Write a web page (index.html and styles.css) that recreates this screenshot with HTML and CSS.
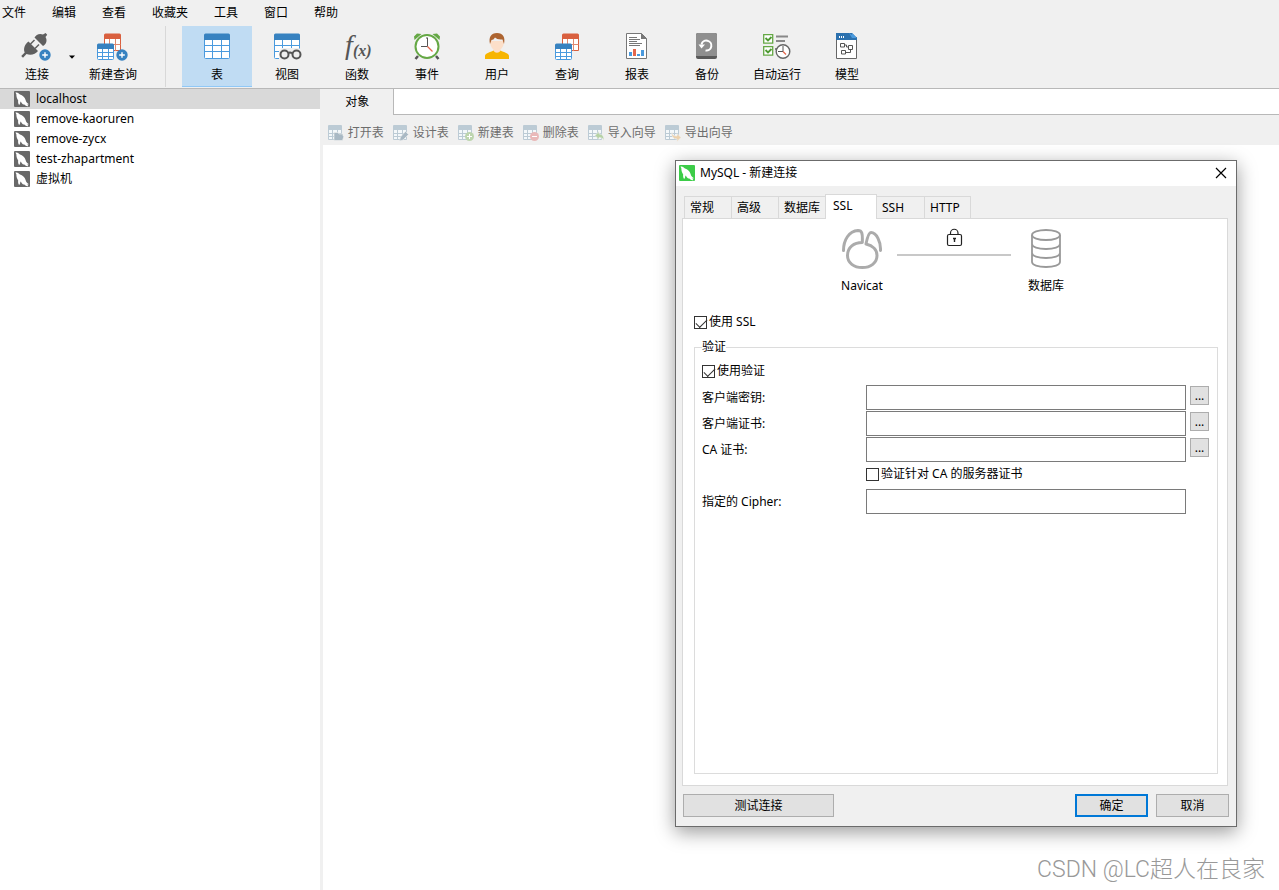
FILE: index.html
```
<!DOCTYPE html>
<html lang="zh-CN">
<head>
<meta charset="utf-8">
<title>Navicat</title>
<link rel="stylesheet" href="styles.css">
</head>
<body>
<svg class="sprite" aria-hidden="true">
  <symbol id="dolphin" viewBox="0 0 16 16">
    <rect width="16" height="16" rx="1"/>
    <path fill="#fff" d="M1.500 1.500C3.500 1 5 2.300 6 3.600C8.500 4.200 10.800 6.200 11.600 9C12 10.900 12.700 12 15 13.300L13.300 13.500L14.500 15.300C12.500 15.200 11.200 14.500 10.400 13.400C8.700 13.800 7.600 12.400 7 10.800L6.300 10.800C6.300 12.300 6 13.200 5.200 14C4.300 12.800 3.800 11.200 4.200 9.400C2.700 7.400 2.300 5.200 2.400 3.500Z"/>
  </symbol>
  <symbol id="grid" viewBox="0 0 26 26">
    <path fill="#fff" d="M.5 1.500h25v24H.5z"/>
    <path fill="none" stroke="#4a9ade" d="M.5 6v18.500a1 1 0 0 0 1 1h23a1 1 0 0 0 1-1V6M8.500 6v19M17.500 6v19M1 12.500h24M1 18.500h24"/>
    <path fill="#3782c0" d="M0 7V2a1.500 1.500 0 0 1 1.500-1.500h23A1.500 1.500 0 0 1 26 2v5z"/>
  </symbol>
  <symbol id="pair" viewBox="0 0 26 28">
    <path fill="#fff" stroke="#d9603f" d="M8.500 6v11.500h16V6"/>
    <path fill="none" stroke="#e08a70" d="M13.500 6v12M19.500 6v12M8.500 11.500h16"/>
    <path fill="#d9603f" d="M8 6V2a1.500 1.500 0 0 1 1.500-1.500h14A1.500 1.500 0 0 1 25 2v4z"/>
    <path fill="#fff" stroke="#4a9ade" d="M1.500 15v10.500a1 1 0 0 0 1 1h14a1 1 0 0 0 1-1V15zM6.500 15v11M12.500 15v11M2 19.500h15M2 23.500h15"/>
    <path fill="#3782c0" d="M1 16v-4a1.500 1.500 0 0 1 1.500-1.500h14A1.500 1.500 0 0 1 18 12v4z"/>
  </symbol>
  <symbol id="plus" viewBox="0 0 12 12">
    <circle cx="6" cy="6" r="5.700" fill="#3782c0"/>
    <path stroke="#fff" stroke-width="1.400" d="M6 3.200v5.600M3.200 6h5.600"/>
  </symbol>
  <symbol id="minigrid" viewBox="0 0 16 16">
    <path fill="#f4f8fa" stroke="#bccbd5" d="M.5 3v11.500h13V3zM4.500 5v10M9.500 5v10M1 8.500h13M1 11.500h13"/>
    <path fill="#bccbd5" d="M0 1a1 1 0 0 1 1-1h12a1 1 0 0 1 1 1v4H0z"/>
  </symbol>
</svg>

<div class="app">
  <nav class="menu" aria-label="主菜单">
    <button>文件</button><button>编辑</button><button>查看</button><button>收藏夹</button><button>工具</button><button>窗口</button><button>帮助</button>
  </nav>

  <div class="toolbar">
    <div class="connect">
      <button class="tool tool--connect">
        <svg width="34" height="30" viewBox="0 0 34 30">
          <g fill="#5f5f5f">
            <path d="M8.500 9.500L18 19C15.500 22.500 10.500 23.500 6.500 22L3 25.800L1.200 24L4.700 20.400C3 16.500 5 12 8.500 9.500z"/>
            <path d="M14.500 5.500L23 14C26.500 12 27.500 8.500 25.500 5L27.200 2.800L25.600 1L23 2.600C19.500 .8 16 2.800 14.500 5.500z"/>
          </g>
          <path stroke="#5f5f5f" stroke-width="1.500" d="M10.500 12l4-4M15 16.500l4-4"/>
          <use href="#plus" x="19" y="17" width="12" height="12"/>
        </svg>
        <span>连接</span>
      </button>
      <button class="drop" aria-label="更多连接"><svg width="6" height="4" viewBox="0 0 6 4"><path d="M0 .5h6L3 3.700z"/></svg></button>
    </div>
    <button class="tool tool--query">
      <svg width="34" height="30" viewBox="0 0 34 30"><use href="#pair" x="0" y="1" width="26" height="28"/><use href="#plus" x="20" y="17" width="12" height="12"/></svg>
      <span>新建查询</span>
    </button>
    <div class="tools">
      <button class="tool tool--on">
        <svg width="26" height="30" viewBox="0 0 26 30"><use href="#grid" y="1" width="26" height="26"/></svg>
        <span>表</span>
      </button>
      <button class="tool">
        <svg width="26" height="30" viewBox="0 0 26 30">
          <use href="#grid" y="1" width="26" height="26"/>
          <path fill="#f0f0f0" d="M5 19l3-3h17l3 3v10H5z"/>
          <g fill="#f0f0f0" stroke="#555" stroke-width="2"><path fill="none" d="M14 21.500q2-2 4 0"/><circle cx="10.500" cy="22.500" r="4"/><circle cx="22.500" cy="22.500" r="4"/></g>
        </svg>
        <span>视图</span>
      </button>
      <button class="tool">
        <svg width="30" height="30" viewBox="0 0 30 30" fill="#555">
          <text class="fx-f" x="3" y="22">f</text><text class="fx-x" x="11" y="24">(x)</text>
        </svg>
        <span>函数</span>
      </button>
      <button class="tool">
        <svg width="28" height="30" viewBox="0 0 28 30">
          <path stroke="#555" stroke-width="2.500" d="M5 24l-2.500 3M23 24l2.500 3"/>
          <path fill="#65a845" d="M1.500 8L1 4.500 4 1.500 8.500 2zM26.500 8l.5-3.500-3-3-4.500.5z"/>
          <circle cx="14" cy="14.500" r="11.500" fill="#fff" stroke="#65a845" stroke-width="2"/>
          <path fill="none" stroke="#555" d="M14.500 6v8.500H8M14 5v2"/><path stroke="#e5674c" stroke-width="1.300" d="M14.500 14.500l5 5"/>
        </svg>
        <span>事件</span>
      </button>
      <button class="tool">
        <svg width="26" height="30" viewBox="0 0 26 30">
          <path fill="#fcdfc9" d="M6 9h14c0 5-2 7-3.500 8.500v4h-7v-4C8 16 6 14 6 9z"/>
          <path fill="#ad6430" d="M6 12C4.500 5 7 1 13 1s8.500 4 7 11l-1.500-4.500q-5.500.5-7.500-2Q9.500 8 7.500 8z"/>
          <path fill="#f7b500" d="M1 27v-3c0-3 5-3.500 8.500-5.500 1.500 3 5.500 3 7 0C20 20.500 25 21 25 24v3z"/>
        </svg>
        <span>用户</span>
      </button>
      <button class="tool">
        <svg width="26" height="30" viewBox="0 0 26 30"><use href="#pair" y="1" width="26" height="28"/></svg>
        <span>查询</span>
      </button>
      <button class="tool">
        <svg width="26" height="30" viewBox="0 0 26 30">
          <path fill="#fff" stroke="#777" d="M2.500 1.500h15l5 5v20h-20z"/><path fill="#777" d="M17 1v6h6z"/>
          <path stroke="#777" d="M5 5.500h8M5 7.500h11M5 9.500h8M5 11.500h13M5 13.500h11"/>
          <path fill="#4a9ade" d="M5 20h3v4H5zM13 22h3v2h-3zM17 18h3v6h-3z"/><path fill="#e5674c" d="M9 17h3v7H9z"/>
        </svg>
        <span>报表</span>
      </button>
      <button class="tool">
        <svg width="26" height="30" viewBox="0 0 26 30">
          <rect x="2" y="1" width="21" height="26" rx="2" fill="#5a5a5a"/><path fill="#8f8f8f" d="M2 24V3a2 2 0 0 1 2-2h17a2 2 0 0 1 2 2v21z"/>
          <path fill="none" stroke="#fff" stroke-width="2" d="M7.500 12.500a5 5 0 1 1 4 6"/><path fill="#fff" d="M4.500 12.500h6.500l-3.500 4z"/>
        </svg>
        <span>备份</span>
      </button>
      <button class="tool">
        <svg width="28" height="30" viewBox="0 0 28 30">
          <path fill="#fff" stroke="#65a845" stroke-width="1.300" d="M.7 2.700h9v8.500h-9zM.7 14.700h9v8.500h-9z"/>
          <path fill="none" stroke="#4f9a33" stroke-width="1.800" d="M2.500 6l2.500 2.500L8.500 5M2.500 18l2.500 2.500L8.500 17"/>
          <path stroke="#888" stroke-width="2" d="M13 4.500h12M13 9h9M12 17h3"/>
          <circle cx="20" cy="19.500" r="6.800" fill="#fff" stroke="#666" stroke-width="1.400"/>
          <path fill="none" stroke="#555" d="M20 14v5.500h-5"/><path stroke="#e5674c" stroke-width="1.300" d="M20 19.500l3 3"/>
        </svg>
        <span>自动运行</span>
      </button>
      <button class="tool">
        <svg width="26" height="30" viewBox="0 0 26 30">
          <path fill="#fff" stroke="#666" d="M2.500 5v21.500h20V5"/>
          <path fill="#2c71ae" d="M2 1h16l5 5v2H2z"/><path fill="#4a9ade" d="M15 1l8 5h-5zM18 1l5 5h-5z"/>
          <path fill="#fff" d="M5 4h1v2H5zM7 4h1v2H7zM9 4h1v2H9z"/>
          <path fill="none" stroke="#555" d="M6.500 11.500h4v3.500h-4zM14.500 13.500h4v4h-4zM7.500 18.500h4v3.500h-4zM10.500 13h2v2h2M16.500 17.500v3h-5"/>
        </svg>
        <span>模型</span>
      </button>
    </div>
  </div>

  <div class="workspace">
    <ul class="tree">
      <li class="tree__row tree__row--on"><svg width="16" height="16"><use href="#dolphin"/></svg>localhost</li>
      <li class="tree__row"><svg width="16" height="16"><use href="#dolphin"/></svg>remove-kaoruren</li>
      <li class="tree__row"><svg width="16" height="16"><use href="#dolphin"/></svg>remove-zycx</li>
      <li class="tree__row"><svg width="16" height="16"><use href="#dolphin"/></svg>test-zhapartment</li>
      <li class="tree__row"><svg width="16" height="16"><use href="#dolphin"/></svg>虚拟机</li>
    </ul>
    <main class="pane">
      <div class="strip"><button class="strip__tab">对象</button><div class="strip__rest"></div></div>
      <div class="actions">
        <button disabled><svg width="16" height="16" viewBox="0 0 16 16"><use href="#minigrid"/><path fill="#a9b9c4" stroke="#f0f0f0" stroke-width=".6" d="M6 15.500v-8h4l1 1.500h4v2h1l-1.500 4.500z"/></svg>打开表</button>
        <button disabled><svg width="16" height="16" viewBox="0 0 16 16"><use href="#minigrid"/><path fill="#a9b9c4" stroke="#f0f0f0" stroke-width=".6" d="M6.500 16l1-4 5-5.500 3 3-5.500 5.500z"/></svg>设计表</button>
        <button disabled><svg width="16" height="16" viewBox="0 0 16 16"><use href="#minigrid"/><circle cx="11.500" cy="11.500" r="4.500" fill="#bdd5ae"/><path stroke="#fff" d="M11.500 9v5M9 11.500h5"/></svg>新建表</button>
        <button disabled><svg width="16" height="16" viewBox="0 0 16 16"><use href="#minigrid"/><circle cx="11.500" cy="11.500" r="4.500" fill="#e9b9b9"/><path stroke="#fff" d="M9 11.500h5"/></svg>删除表</button>
        <button disabled><svg width="16" height="16" viewBox="0 0 16 16"><use href="#minigrid"/><path fill="#b5d2a5" stroke="#f0f0f0" stroke-width=".6" d="M7 10.500l4-4V9c3 0 5 2 5 6.500-1-2-2.500-3-5-3v2z"/></svg>导入向导</button>
        <button disabled><svg width="16" height="16" viewBox="0 0 16 16"><use href="#minigrid"/><path fill="#ecd2ae" stroke="#f0f0f0" stroke-width=".6" d="M7 7c0 3 2 4 5 4V8.500l4 4-4 4V14c-4 0-6-3-5-7z"/></svg>导出向导</button>
      </div>
      <div class="objects"></div>
    </main>
  </div>

  <p class="watermark">CSDN @LC超人在良家</p>

  <section class="dialog" role="dialog" aria-labelledby="dialog-title">
    <header class="dialog__title">
      <svg width="16" height="16"><use href="#dolphin"/></svg>
      <h1 id="dialog-title">MySQL - 新建连接</h1>
      <button aria-label="关闭"><svg width="12" height="12" viewBox="0 0 12 12"><path stroke="#000" stroke-width="1.200" d="M1 1l10 10M11 1L1 11"/></svg></button>
    </header>
    <div class="dialog__body">
      <div class="tabs" role="tablist">
        <button role="tab">常规</button><button role="tab">高级</button><button role="tab">数据库</button><button role="tab" aria-selected="true" class="tabs__on">SSL</button><button role="tab">SSH</button><button role="tab">HTTP</button>
      </div>
      <div class="panel" role="tabpanel">
        <div class="route">
          <figure>
            <svg width="42" height="42" viewBox="0 0 42 42" fill="none" stroke="#ababab" stroke-width="3" stroke-linecap="round" stroke-linejoin="round">
              <path d="M2.500 22.500C2.500 12 8 3 17 2.500C21 2.500 21.700 5 21.300 14.500C13 14.500 6.500 19 6.500 27.500C6.500 35 13 39.500 21.300 39.500S36 35 36 27.500C36 22 32 17.500 25 16C26 11 27.500 4.500 30 4.500C35.500 4.500 40 14 39.500 22.500"/>
            </svg>
            <figcaption>Navicat</figcaption>
          </figure>
          <div class="link">
            <svg width="17" height="18" viewBox="0 0 17 18" fill="none" stroke="#222"><path d="M4.500 7V5a3.700 3.700 0 0 1 7.500 0V7" stroke-width="1.200"/><rect x="1.500" y="6.500" width="14" height="11" rx="1.500" stroke-width="1.200"/><path d="M8.500 10v4M7 10.500h3" stroke-width="1.400"/></svg>
          </div>
          <figure>
            <svg width="42" height="42" viewBox="0 0 42 42" fill="none" stroke="#999" stroke-width="1.800"><ellipse cx="21" cy="7" rx="14" ry="5"/><path d="M7 7v27c0 3 6 5 14 5s14-2 14-5V7M7 16c0 3 6 5 14 5s14-2 14-5M7 25c0 3 6 5 14 5s14-2 14-5"/></svg>
            <figcaption>数据库</figcaption>
          </figure>
        </div>
        <label class="check"><input type="checkbox" checked>使用 SSL</label>
        <fieldset class="auth">
          <legend>验证</legend>
          <label class="check"><input type="checkbox" checked>使用验证</label>
          <div class="form">
            <label for="key">客户端密钥:</label><input id="key" type="text"><button aria-label="浏览客户端密钥">...</button>
            <label for="cert">客户端证书:</label><input id="cert" type="text"><button aria-label="浏览客户端证书">...</button>
            <label for="ca">CA 证书:</label><input id="ca" type="text"><button aria-label="浏览 CA 证书">...</button>
            <label class="check form__verify"><input type="checkbox">验证针对 CA 的服务器证书</label>
            <label for="cipher">指定的 Cipher:</label><input id="cipher" type="text">
          </div>
        </fieldset>
      </div>
      <footer class="buttons">
        <button class="buttons__test">测试连接</button>
        <button class="buttons__ok">确定</button>
        <button>取消</button>
      </footer>
    </div>
  </section>
</div>
</body>
</html>
```
FILE: styles.css
```
* {
  box-sizing: border-box;
}

body {
  margin: 0;
  background: #fff;
  color: #000;
  font: 12px/16px "Noto Sans", "Noto Sans CJK SC", sans-serif;
}

button,
input {
  margin: 0;
  padding: 0;
  border: 0;
  border-radius: 0;
  background: none;
  color: inherit;
  font: inherit;
}

svg {
  display: block;
  flex: none;
  overflow: visible;
}

.sprite {
  position: absolute;
  width: 0;
  height: 0;
  overflow: hidden;
}

.app {
  position: relative;
  display: flex;
  flex-direction: column;
  min-height: 100vh;
  overflow: hidden;
}

.menu {
  display: flex;
  gap: 26px;
  padding: 5px 2px 3px;
  background: #f0f0f0;
}

/* main toolbar */
.toolbar {
  display: flex;
  padding: 2px 0 1px;
  border-bottom: 1px solid #b8b8b8;
  background: #f0f0f0;
}

.connect {
  display: flex;
  padding-left: 12px;
}

.drop {
  width: 20px;
  display: flex;
  align-items: center;
  justify-content: center;
}

.tool {
  display: flex;
  flex-direction: column;
  align-items: center;
  gap: 5px;
  width: 70px;
  height: 61px;
  padding-top: 6px;
  white-space: nowrap;
}

.tool--connect {
  width: 50px;
}

.tool--query {
  width: 62px;
}

.tool--on {
  background: #c0dcf3;
  border-bottom: 1px solid #90c8f6;
}

.tools {
  display: flex;
  margin-left: 21px;
  padding-left: 16px;
  border-left: 1px solid #d8d8d8;
}

.fx-f {
  font: italic 28px "Liberation Serif", serif;
}

.fx-x {
  font: italic bold 16px "Liberation Serif", serif;
}

/* connections and object pane */
.workspace {
  display: flex;
  flex: 1;
}

.tree {
  width: 25%;
  margin: 0;
  padding: 0;
  list-style: none;
}

.tree__row {
  display: flex;
  align-items: center;
  gap: 6px;
  height: 20px;
  padding-left: 14px;
  fill: #696969;
}

.tree__row--on {
  background: #d9d9d9;
}

.pane {
  display: flex;
  flex: 1;
  flex-direction: column;
}

.strip {
  display: flex;
  height: 26px;
  background: #f0f0f0;
}

.strip__tab {
  width: 75px;
}

.strip__rest {
  flex: 1;
  margin-left: -2px;
  border: solid #b8b8b8;
  border-width: 0 0 1px 1px;
  background: #fff;
}

.actions {
  display: flex;
  gap: 9px;
  height: 30px;
  padding: 5px 8px 0;
  background: #f0f0f0;
}

.actions button {
  display: flex;
  align-items: center;
  gap: 4px;
  color: #6d6d6d;
}

.objects {
  flex: 1;
  border-left: 3px solid #f0f0f0;
}

.watermark {
  position: absolute;
  right: 14px;
  bottom: 5px;
  margin: 0;
  color: #999;
  font: 300 23px/30px Roboto, "Noto Sans CJK SC", sans-serif;
}

/* connection dialog */
.dialog {
  position: absolute;
  top: 160px;
  left: 675px;
  display: flex;
  flex-direction: column;
  width: 562px;
  height: 667px;
  border: 1px solid #6b6b6b;
  background: #f0f0f0;
  box-shadow: 0 5px 18px rgba(0, 0, 0, .4);
}

.dialog__title {
  display: flex;
  align-items: center;
  gap: 5px;
  height: 25px;
  padding: 0 9px 1px 3px;
  background: #fff;
  fill: #3ccc48;
}

.dialog__title h1 {
  flex: 1;
  margin: 0;
  font-size: 12px;
  font-weight: 400;
}

.dialog__body {
  display: flex;
  flex: 1;
  flex-direction: column;
  padding: 8px 8px 9px 6px;
}

.tabs {
  display: flex;
  align-items: flex-end;
  padding-left: 2px;
}

.tabs button {
  width: 47px;
  height: 22px;
  padding-left: 5px;
  border: solid #d9d9d9;
  border-width: 1px 0 0 1px;
  text-align: left;
  white-space: nowrap;
}

.tabs button:last-child {
  border-right-width: 1px;
}

.tabs .tabs__on {
  z-index: 1;
  width: 52px;
  height: 25px;
  margin-bottom: -1px;
  padding: 0 7px 2px;
  border-right-width: 1px;
  background: #fff;
}

.tabs__on + button {
  border-left: 0;
}

.panel {
  display: flex;
  flex: 1;
  flex-direction: column;
  padding: 9px 9px 11px 11px;
  border: 1px solid #d9d9d9;
  background: #fff;
}

.route {
  display: flex;
  justify-content: center;
  gap: 13px;
  margin-bottom: 20px;
  padding-right: 4px;
}

.route figure {
  display: flex;
  flex-direction: column;
  align-items: center;
  gap: 8px;
  width: 44px;
  margin: 0;
}

.link {
  display: flex;
  justify-content: center;
  width: 114px;
  height: 28px;
  border-bottom: 2px solid #c8c8c8;
}

.check {
  display: flex;
  align-items: center;
  gap: 2px;
}

.check input {
  width: 13px;
  height: 13px;
  border: 1px solid #333;
  appearance: none;
}

.check input:checked::before {
  content: "";
  display: block;
  width: 10px;
  height: 5px;
  margin: 2px 1px;
  border: solid #333;
  border-width: 0 0 1px 1px;
  rotate: -45deg;
}

.auth {
  flex: 1;
  margin: 9px 0 0;
  padding: 8px 8px 7px 7px;
  border: 1px solid #dcdcdc;
}

.auth legend {
  padding: 0;
}

.form {
  display: grid;
  grid-template-columns: 160px 1fr 19px;
  gap: 1px 4px;
  padding-top: 6px;
}

.form > label {
  align-self: center;
}

.form input[type="text"] {
  width: 100%;
  height: 25px;
  border: 1px solid #7a7a7a;
}

.form > button {
  width: 19px;
  height: 19px;
  margin-top: 1px;
  border: 1px solid #adadad;
  background: #e1e1e1;
}

.form .form__verify {
  grid-column: 2 / 4;
  height: 22px;
  margin-bottom: 3px;
}

.buttons {
  display: flex;
  gap: 8px;
  padding: 8px 0 0 1px;
  margin-right: -1px;
}

.buttons button {
  width: 73px;
  height: 23px;
  border: 1px solid #adadad;
  background: #e1e1e1;
}

.buttons .buttons__test {
  width: 151px;
  margin-right: auto;
}

.buttons .buttons__ok {
  border: 2px solid #0078d7;
}
```
